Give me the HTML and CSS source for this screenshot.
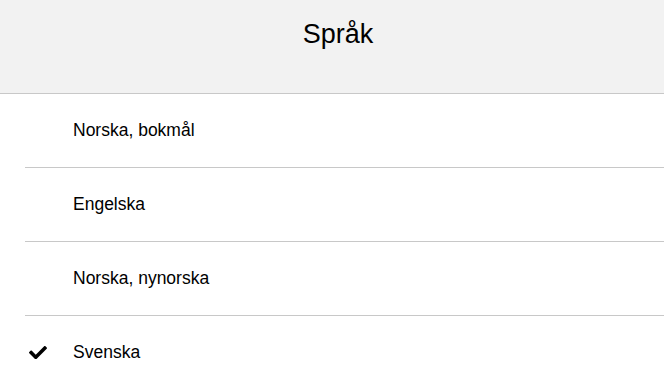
FILE: index.html
```html
<!DOCTYPE html>
<html lang="no">
<head>
<meta charset="utf-8">
<title>Språk</title>
<link rel="stylesheet" href="styles.css">
</head>
<body>
<header class="topbar">
  <h1 class="title">Språk</h1>
</header>
<ul class="lang-list">
  <li class="lang-item"><span class="mark"></span><span class="label">Norska, bokmål</span></li>
  <li class="lang-item"><span class="mark"></span><span class="label">Engelska</span></li>
  <li class="lang-item"><span class="mark"></span><span class="label">Norska, nynorska</span></li>
  <li class="lang-item"><span class="mark"><svg class="check" viewBox="0 65 512 382" aria-hidden="true"><path d="M173.898 439.404l-166.4-166.4c-9.997-9.997-9.997-26.206 0-36.204l36.203-36.204c9.997-9.998 26.207-9.998 36.204 0L192 312.69 432.095 72.596c9.997-9.997 26.207-9.997 36.204 0l36.203 36.204c9.997 9.997 9.997 26.206 0 36.204l-294.4 294.401c-9.998 9.997-26.207 9.997-36.204-.001z"/></svg></span><span class="label">Svenska</span></li>
</ul>
</body>
</html>
```
FILE: styles.css
```css
html, body {
  margin: 0;
  padding: 0;
  background: #ffffff;
}
body {
  font-family: "Liberation Sans", Arial, sans-serif;
  color: #000000;
  overflow: hidden;
}
.topbar {
  height: 74px;
  padding: 19px 0 0 12px;
  background: #f2f2f2;
  border-bottom: 1px solid #c8c8c8;
  display: flex;
  justify-content: center;
  align-items: flex-start;
}
.title {
  margin: 0;
  font-size: 27px;
  font-weight: normal;
  line-height: normal;
}
.lang-list {
  list-style: none;
  margin: 0 0 0 25px;
  padding: 0;
}
.lang-item {
  height: 73px;
  display: flex;
  align-items: center;
  border-bottom: 1px solid #c8c8c8;
  font-size: 17.5px;
}
.mark {
  width: 48px;
  flex: none;
  display: flex;
  align-items: center;
  padding-left: 4px;
  box-sizing: border-box;
}
.check {
  width: 18px;
  height: 13.4px;
  display: block;
  fill: #000000;
}
```
